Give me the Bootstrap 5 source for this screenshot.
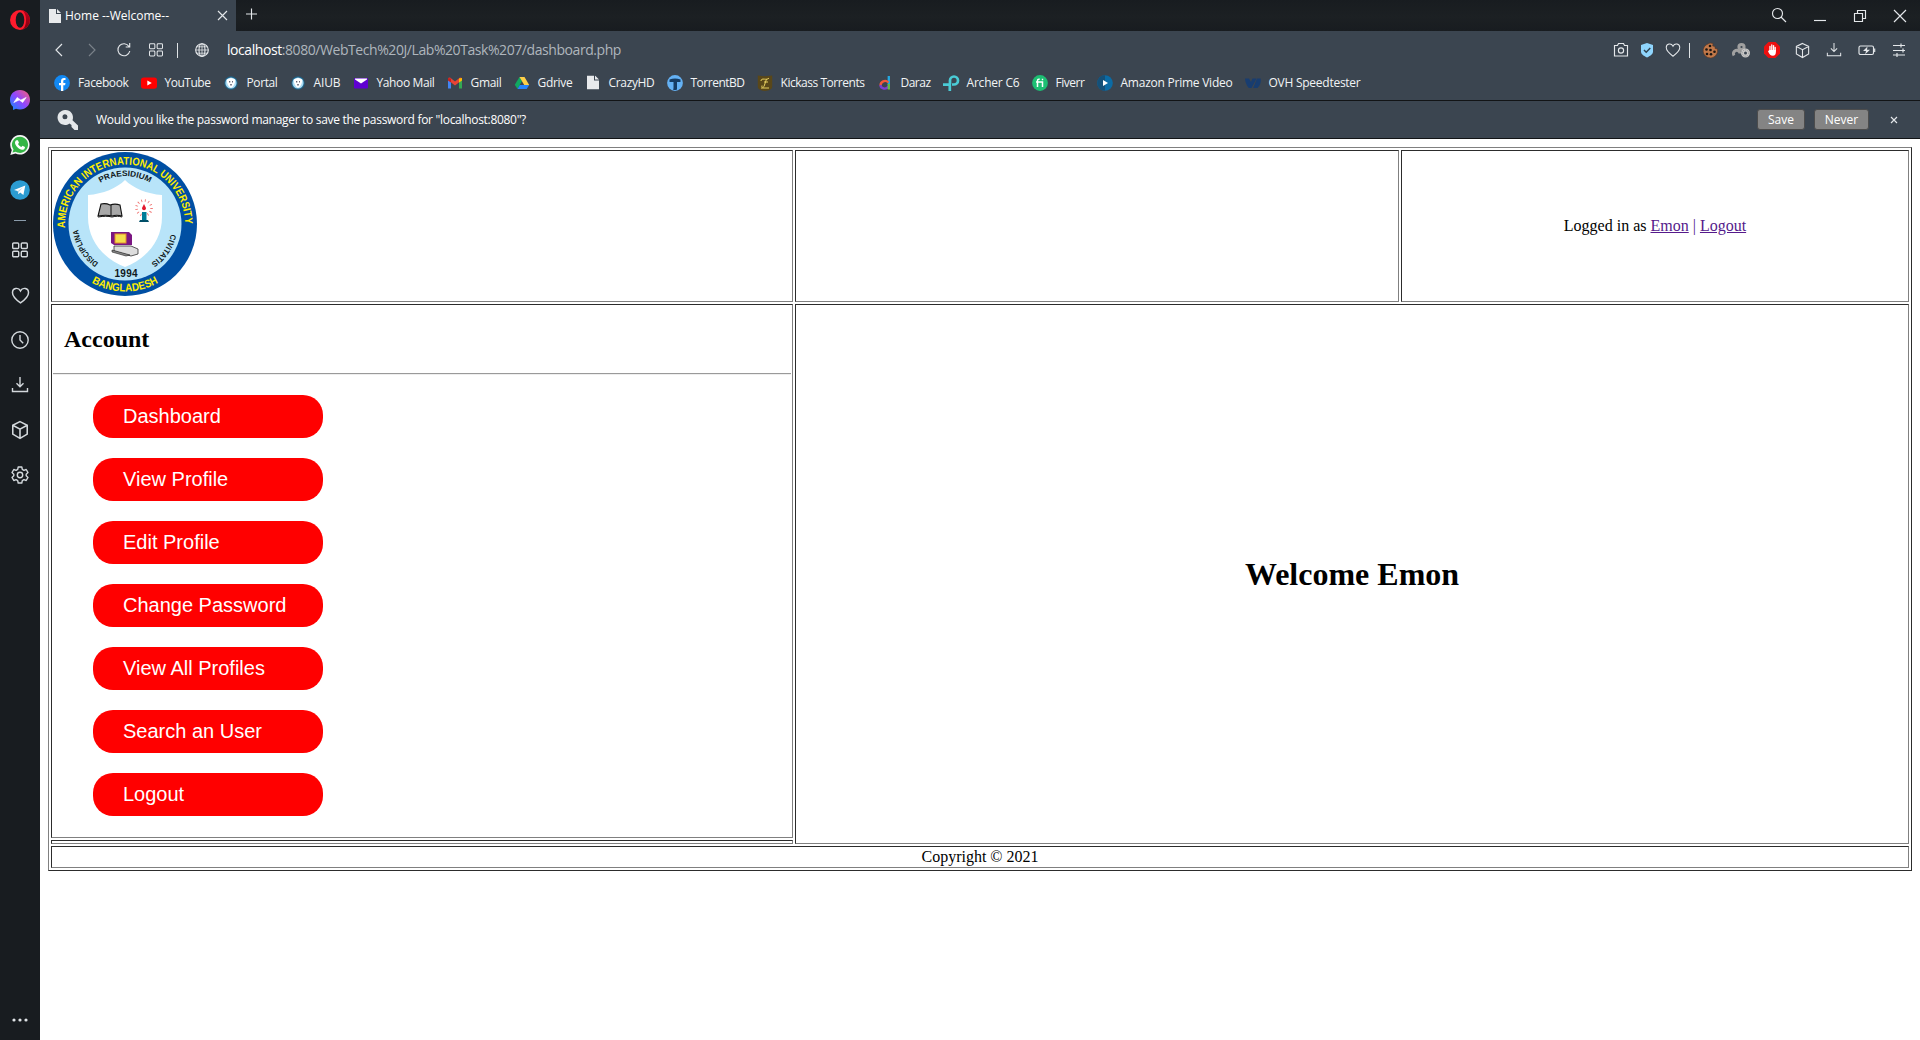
<!DOCTYPE html>
<html lang="en">
<head>
<meta charset="utf-8">
<title>Home --Welcome--</title>
<link href="https://cdn.jsdelivr.net/npm/bootstrap@5.3.0/dist/css/bootstrap.min.css" rel="stylesheet">
<style>
body{font-family:"Open Sans","Noto Sans",sans-serif;font-size:12px;line-height:16px;overflow:hidden;background:#fff}
svg{display:block;flex:none;overflow:visible}
.ln{fill:none;stroke:#e4e7ea;stroke-width:1.15}
.side{width:40px;background:#181c20}
.side .slot{height:45px}
.side .first{height:40px;margin-bottom:37.5px}
.side .dash{height:15px}
.side .more{height:22px}
.side .ln{stroke-width:1.4;stroke:#d3d8dc}
.tabs{height:31px;background:linear-gradient(#181c20,#1c2023 55%,#181c20)}
.tab1{width:196px;background:#3b4550;color:#fff;padding:0 9px 0 9px}
.wins{gap:28px;padding-right:14px}
.chrome{background:#3b4550;color:#f2f4f5}
.addr{height:38px;padding:0 12px 0 13px}
.url{font-size:14px;line-height:20px;color:#afb6bd}
.url b{font-weight:400;color:#fff}
.vsep{width:1px;height:15px;background:#dfe3e6}
.marks{height:32px;border-bottom:1px solid #121416;padding:6px 0 0 14px;gap:12px}
.info{height:38px;border-bottom:1px solid #121416;padding:0 23px 0 18px;color:#fff}
.ibtn{height:21px;background:#848484;border:1px solid #4c4c4c;border-radius:3px;color:#fff;font-size:12px;line-height:18px;padding:0}
.page{padding:8px;font-family:"Liberation Serif",serif;font-size:16px;line-height:18px;color:#000}
.grid0{width:1864px;height:724px;table-layout:fixed;border-collapse:separate;border-spacing:2px;border:1px solid;border-color:#808080 #2c2c2c #2c2c2c #808080}
.grid0 td{border:1px solid;border-color:#2c2c2c #808080 #808080 #2c2c2c;padding:1px;vertical-align:middle}
.grid0 h2{font-size:24px;line-height:27px;font-weight:700;margin:20px 0 20px 11px}
.grid0 h1{font-size:32px;line-height:36px;font-weight:700;margin:0}
.rule{height:2px;border-top:1px solid #9a9a9a;border-bottom:1px solid #eee}
.menu{padding:20px 0 20px 40px;gap:20px}
.menu a{width:230px;height:43px;border-radius:20px;background:#f00;color:#fff;font:20px/42px "Liberation Sans",sans-serif;padding-left:30px;text-decoration:none}
.who a{color:#551a8b}
.who i{font-style:normal;color:#551a8b}
.seal text{font-family:"Liberation Sans Narrow","Liberation Sans",sans-serif;font-weight:700}
</style>
<script src="https://cdn.jsdelivr.net/npm/bootstrap@5.3.0/dist/js/bootstrap.bundle.min.js"></script>
</head>
<body class="d-flex vh-100">
<svg width="0" height="0" class="position-absolute">
<defs>
<symbol id="cube" viewBox="0 0 18 18"><path d="M9 1.500l6.500 3.200v8L9 16.500l-6.500-3.800v-8zM2.500 4.700L9 8.200l6.500-3.500M9 8.200v8.300"/></symbol>
<symbol id="heart" viewBox="0 0 18 18"><path d="M9 16C6 13.800 1.400 10.200 1.400 6.300 1.400 1.800 7 .8 9 4.700 11 .8 16.600 1.800 16.600 6.300 16.600 10.200 12 13.800 9 16z"/></symbol>
<symbol id="down" viewBox="0 0 18 18"><path d="M9 1v9.500M5.500 7.200L9 10.700l3.500-3.500M1.500 12v3.500h15V12"/></symbol>
<symbol id="four" viewBox="0 0 18 18"><rect x="1.700" y="2" width="6" height="5.500" rx="1"/><rect x="10.300" y="2" width="6" height="5.500" rx="1"/><rect x="1.700" y="10.200" width="6" height="5.500" rx="1"/><rect x="10.300" y="10.200" width="6" height="5.500" rx="1"/></symbol>
<symbol id="doc" viewBox="0 0 12 14"><path fill="#e8eaec" d="M0 0h7v5h5v9H0zM8 0l4 4H8z"/></symbol>
<symbol id="crest" viewBox="0 0 16 16"><circle cx="8" cy="8" r="6.700" fill="#1f6186"/><circle cx="8" cy="8" r="5.600" fill="#a9dcf5"/><path d="M3.800 4.500L8 3l4.200 1.500c0 4-1 6.500-4.200 8.500-3.200-2-4.200-4.500-4.200-8.500z" fill="#fff"/><path d="M6 6h1.300v1.500H6zM9 6h1v1.500H9zM7.200 9h1.600v1.600H7.200z" fill="#667"/></symbol>
<linearGradient id="gm" x1="0" y1="1" x2="1" y2="0"><stop offset="0" stop-color="#0a8cff"/><stop offset=".5" stop-color="#9146ff"/><stop offset="1" stop-color="#ff5f70"/></linearGradient>
<linearGradient id="go" x1="0" x2="0" y1="0" y2="1"><stop offset="0" stop-color="#c0001c"/><stop offset="1" stop-color="#7e000f"/></linearGradient>
</defs></svg>

<nav class="side d-flex flex-column align-items-center flex-shrink-0">
 <div class="first d-flex align-items-center"><svg width="20" height="20" viewBox="0 0 20 20"><ellipse cx="10" cy="10" rx="10" ry="10" fill="#ff1b2d"/><path d="M10 0a10 10 0 0 1 0 20c4 0 6-5 6-10S14 0 10 0z" fill="url(#go)"/><ellipse cx="10" cy="10" rx="4.300" ry="7.800" fill="#181c20"/></svg></div>
 <div class="slot d-flex align-items-center"><svg width="20" height="20" viewBox="0 0 20 20"><path fill="url(#gm)" d="M10 0C4 0 0 4.300 0 9.700c0 3 1.200 5.500 3 7.100V20l3-1.300c1.200.5 2.600.7 4 .7 6 0 10-4.300 10-9.700S16 0 10 0z"/><path d="M3.800 12.600l3.400-5.200 3.600 2.700L16.200 7.400l-3.500 5.100-3.500-2.600z" fill="#fff" stroke="#fff" stroke-width=".6"/></svg></div>
 <div class="slot d-flex align-items-center"><svg width="20" height="20" viewBox="0 0 20 20"><path fill="#f5f5f5" d="M10.200 0A9.800 9.800 0 0 0 1.800 15L.3 20l5.200-1.400A9.800 9.800 0 1 0 10.200 0z"/><path fill="#34b545" d="M10.200 1.700a8.100 8.100 0 0 0-6.700 12.900l-1 3 3.200-.9A8.100 8.100 0 1 0 10.200 1.700z"/><path fill="#fff" d="M6.600 5.300h1.300l1.100 2.500-1 1.300c.8 1.500 1.900 2.400 3.400 3l1.100-1.300 2.500 1.200c0 2-1.400 2.800-3 2.800-3-.3-6.800-4-7-7 0-1.200.6-2.200 1.600-2.500z"/></svg></div>
 <div class="slot d-flex align-items-center"><svg width="20" height="20" viewBox="0 0 20 20"><circle cx="10" cy="10" r="9.800" fill="#2c9cd2"/><path d="M4 10L15.300 5.400 13.400 15l-3.300-2.500-1.700 1.800-.7-3.300z" fill="#fff"/><path d="M7.800 11l5.400-3.700-4 4.300-.8 2.400z" fill="#b8d4e4"/></svg></div>
 <div class="dash d-flex align-items-center"><svg width="12" height="1"><rect width="12" height="1" fill="#8b9cab"/></svg></div>
 <div class="slot d-flex align-items-center"><svg class="ln" width="18" height="18"><use href="#four"/></svg></div>
 <div class="slot d-flex align-items-center"><svg class="ln" width="19" height="19"><use href="#heart"/></svg></div>
 <div class="slot d-flex align-items-center"><svg class="ln" width="18" height="18" viewBox="0 0 18 18"><circle cx="9" cy="9" r="8.200"/><path d="M9 4v5l3.200 3.200"/></svg></div>
 <div class="slot d-flex align-items-center"><svg class="ln" width="18" height="18"><use href="#down"/></svg></div>
 <div class="slot d-flex align-items-center"><svg class="ln" width="20" height="20"><use href="#cube"/></svg></div>
 <div class="slot d-flex align-items-center"><svg class="ln" width="18" height="18" viewBox="0 0 18 18" stroke-linejoin="round"><path d="M7.200 1h3.600l.5 2.400 1.600.9 2.300-.8 1.800 3.100L15.200 8.200v1.600l1.800 1.600-1.800 3.100-2.300-.8-1.600.9-.5 2.400H7.200l-.5-2.400-1.600-.9-2.300.8L1 11.400l1.800-1.600V8.200L1 6.600l1.800-3.100 2.300.8 1.600-.9z"/><circle cx="9" cy="9" r="2.700"/></svg></div>
 <div class="more mt-auto"><svg width="16" height="4"><g fill="#dfe3e6"><circle cx="2" cy="2" r="1.600"/><circle cx="8" cy="2" r="1.600"/><circle cx="14" cy="2" r="1.600"/></g></svg></div>
</nav>

<div class="flex-grow-1 d-flex flex-column">
<header class="chrome">
 <div class="tabs d-flex justify-content-between">
  <div class="d-flex align-items-stretch">
   <div class="tab1 d-flex align-items-center"><svg width="12" height="14"><use href="#doc"/></svg><span class="ms-1 text-nowrap" data-w="104">Home --Welcome--</span><svg class="ms-auto ln" width="9" height="9" viewBox="0 0 9 9"><path d="M0 0l9 9M9 0L0 9"/></svg></div>
   <svg class="ln align-self-center ms-2 mb-1" width="12" height="12" viewBox="0 0 12 12"><path d="M7.500 .5v11M2 6h11"/></svg>
  </div>
  <div class="wins d-flex align-items-center">
   <svg class="ln" width="14" height="14" viewBox="0 0 14 14"><circle cx="5.500" cy="4.500" r="5"/><path d="M9 8l5 5"/></svg>
   <svg class="ln" width="12" height="12" viewBox="0 0 12 12"><path d="M0 10.500h12"/></svg>
   <svg class="ln" width="12" height="12" viewBox="0 0 12 12"><path d="M.5 3.500h8v8h-8zM3.500 3.500v-3h8v8h-3"/></svg>
   <svg class="ln" width="12" height="12" viewBox="0 0 12 12"><path d="M0 0l12 12M12 0L0 12"/></svg>
  </div>
 </div>
 <div class="addr d-flex align-items-center">
  <svg class="ln" width="12" height="14" viewBox="0 0 12 14"><path d="M9 1L3 7l6 6"/></svg>
  <svg class="ln ms-3 opacity-50" width="12" height="14" viewBox="-4 0 12 14"><path d="M4 1l6 6-6 6" opacity=".75"/></svg>
  <svg class="ln" style="margin-left:24px" width="14" height="14" viewBox="0 0 14 14"><path d="M12 3.500A6 6 0 1 0 12.800 8M12.700 0v4H8.700"/></svg>
  <svg class="ln" style="margin-left:17px" width="16" height="16"><use href="#four"/></svg>
  <span class="vsep" style="margin-left:13px"></span>
  <svg class="ln" style="margin-left:17px" width="14" height="14" viewBox="0 0 14 14"><circle cx="7" cy="7" r="6.300"/><ellipse cx="7" cy="7" rx="3" ry="6.300"/><path d="M.7 7h12.600M7 .7v12.600M1.600 3.800h10.800M1.600 10.200h10.800" stroke-width=".8"/></svg>
  <span class="url text-nowrap" style="margin-left:18px" data-w="394"><b>localhost</b>:8080/WebTech%20J/Lab%20Task%207/dashboard.php</span>
  <div class="d-flex align-items-center ms-auto">
   <svg class="ln" width="18" height="18" viewBox="0 0 18 18"><path d="M2.500 4.500h3l1-2h5l1 2h3v10.500h-13z"/><circle cx="9" cy="9.500" r="2.600"/></svg>
   <svg style="margin-left:8px" width="18" height="18" viewBox="0 0 18 18"><path fill="#8fd5fd" d="M9 2l6 2v6.500c0 3-3 4.500-6 6-3-1.500-6-3-6-6V4z"/><path d="M6 9l2.200 2.200L12.300 7" fill="none" stroke="#2e4352" stroke-width="1.500"/></svg>
   <svg class="ln" style="margin-left:9px" width="16" height="16"><use href="#heart"/></svg>
   <span class="vsep" style="margin:0 11px 0 8px"></span>
   <svg width="18" height="18" viewBox="0 0 18 18"><path fill="#c17849" stroke="#5a3521" stroke-width=".6" d="M9 2l3 .5-.3 2.500 2.300.5v2l2.300.4A7.200 7.200 0 1 1 5 4z"/><g fill="#191513"><circle cx="9" cy="5" r="1.300"/><circle cx="5.500" cy="8.500" r="1.300"/><circle cx="9.500" cy="9" r="1.300"/><circle cx="6" cy="13" r="1.300"/><circle cx="10" cy="13.300" r="1.300"/><circle cx="13.500" cy="10.800" r="1.300"/></g></svg>
   <svg style="margin-left:13px" width="18" height="18" viewBox="0 0 18 18"><g fill="none" stroke="#a0a0a0" stroke-width="3"><circle cx="9.500" cy="6" r="2.600"/><path d="M2 14.500a3.300 3.300 0 1 1 6-2"/><circle cx="13.500" cy="12" r="3" stroke="#c8c8c8"/></g><circle cx="13.500" cy="12" r="3.200" fill="none" stroke="#777" stroke-width=".6" stroke-dasharray="1 1"/></svg>
   <svg style="margin-left:13px" width="18" height="18" viewBox="0 0 18 18"><path fill="#ed1010" d="M5.500 1h7L17 5.500v7L12.500 17h-7L1 12.500v-7z"/><path d="M7 10V5.300M8.800 9V4M10.600 9V4.600M12.200 10V6.500" stroke="#fff" stroke-width="1.300" stroke-linecap="round"/><path fill="#fff" d="M6.400 9h6.500v2c0 2-1 3.800-3 3.800-2.300 0-3.600-1.500-4.900-4.500l.8-.7z"/></svg>
   <svg class="ln" style="margin-left:13px" width="17" height="17"><use href="#cube"/></svg>
   <svg class="ln" style="margin-left:15px" width="16" height="16"><use href="#down"/></svg>
   <svg class="ln" style="margin-left:16px" width="18" height="18" viewBox="0 0 18 18"><rect x="1" y="5" width="14.500" height="8.500" rx="1.500"/><path d="M16.700 7.500v3.500"/><path fill="#e4e7ea" stroke="none" d="M9.500 5.500L5 10h3l-.8 3.300L12 8.700H9z"/></svg>
   <svg class="ln" style="margin-left:14px" width="18" height="18" viewBox="0 0 18 18"><path d="M3 4.500h12M3 9.500h12M3 14h12M11 2.500v4M13 7.500v4M7 12v4"/></svg>
  </div>
 </div>
 <div class="marks d-flex text-nowrap">
  <div class="d-flex gap-2"><svg width="16" height="16" viewBox="0 0 16 16"><circle cx="8" cy="8" r="7.900" fill="#1289f4"/><path fill="#fff" d="M7 16v-5.700H5V8h2V6.300C7 4 8.200 3 10 3l1.500.1v2h-1C9.600 5.100 9.300 5.600 9.300 6.300V8h2.200l-.4 2.300H9.300V16z"/></svg><span data-w="50.500">Facebook</span></div>
  <div class="d-flex gap-2"><svg width="16" height="16" viewBox="0 0 16 16"><rect y="2.500" width="16" height="11.300" rx="2.800" fill="#f00"/><path d="M6.300 5.600v5l4.500-2.500z" fill="#fff"/></svg><span data-w="46">YouTube</span></div>
  <div class="d-flex gap-2"><svg width="16" height="16"><use href="#crest"/></svg><span data-w="31">Portal</span></div>
  <div class="d-flex gap-2"><svg width="16" height="16"><use href="#crest"/></svg><span data-w="27">AIUB</span></div>
  <div class="d-flex gap-2"><svg width="16" height="16" viewBox="0 0 16 16"><rect x="1" y="3" width="14" height="10.500" rx="1" fill="#5f01d1"/><path fill="#fff" d="M2 3.500h12v1L8 8.500 2 4.500z"/></svg><span data-w="58">Yahoo Mail</span></div>
  <div class="d-flex gap-2"><svg width="16" height="16" viewBox="0 0 16 16"><path fill="#4285f4" d="M1 4.500l3 2v7H1z"/><path fill="#34a853" d="M12 6.500l3-2v9h-3z"/><path fill="#ea4335" d="M1 3l2-.4 5 4 5-4L15 3v2l-7 5.500L1 5z"/><path fill="#fbbc04" d="M12 3.500L15 3v2.500l-3 2z"/><path fill="#c5221f" d="M1 3l3 .5v4l-3-2z"/></svg><span data-w="31">Gmail</span></div>
  <div class="d-flex gap-2"><svg width="16" height="16" viewBox="0 0 16 16"><path fill="#11a861" d="M5.500 2L8 6 3.500 14 .8 9.800z"/><path fill="#ffcf48" d="M5.500 2h5l4.700 8h-5z"/><path fill="#2684fc" d="M5.800 10h9.400l-2.500 4H3.500z"/></svg><span data-w="35">Gdrive</span></div>
  <div class="d-flex gap-2"><svg width="16" height="15" viewBox="0 0 16 14"><use href="#doc" x="2" width="12" height="14"/></svg><span data-w="46">CrazyHD</span></div>
  <div class="d-flex gap-2"><svg width="16" height="16" viewBox="0 0 16 16"><circle cx="8" cy="8" r="7.900" fill="#64b1f4"/><path fill="#163c63" d="M2.500 4.500C6 3 10 3 13.500 4.500V7h-3.500v7.500c-1.400.7-2.800.7-4 0l.5-1V7h-4z"/></svg><span data-w="54">TorrentBD</span></div>
  <div class="d-flex gap-2"><svg width="16" height="16" viewBox="0 0 16 16"><path fill="#594719" d="M.8.500L8 1.300l7.200-.8v11c0 3-3.200 4-7.200 4.500-4-.5-7.200-1.500-7.200-4.500z"/><path d="M4 6c0-4 6 0 8-3M9.500 4L7 11.500c-1 1.500-3 .5-2-1M7 7h4M4 13h8" fill="none" stroke="#e6cf60" stroke-width="1"/></svg><span data-w="84">Kickass Torrents</span></div>
  <div class="d-flex gap-2"><svg width="16" height="16" viewBox="0 0 16 16"><g fill="none" stroke-width="2.300"><path d="M11.800 1v9" stroke="#24a9e2"/><path d="M11.500 7.500C8 4 3.500 7 3.500 10.500" stroke="#f4583a"/><path d="M3.500 10c0 4 6 5 8 1" stroke="#7c3fd0"/><path d="M11.800 9v5.500" stroke="#63bf42"/></g></svg><span data-w="30">Daraz</span></div>
  <div class="d-flex gap-2"><svg width="16" height="16" viewBox="0 0 16 16"><path d="M7 9V5.500A4 4 0 1 1 11 9.500H9M0 9.700h6.800V16" fill="none" stroke="#4acbd6" stroke-width="2.700"/></svg><span data-w="53">Archer C6</span></div>
  <div class="d-flex gap-2"><svg width="16" height="16" viewBox="0 0 16 16"><circle cx="8" cy="8" r="7.900" fill="#1dbf73"/><path d="M5.500 12V6c0-1.500 1-2 2.200-1.700M4 7h6.500v5M9.800 4.500h1.400" fill="none" stroke="#fff" stroke-width="1.500"/></svg><span data-w="29">Fiverr</span></div>
  <div class="d-flex gap-2"><svg width="16" height="16" viewBox="0 0 16 16"><circle cx="8" cy="8" r="7.800" fill="#0b6ba5"/><path d="M8 .2a7.800 7.800 0 0 0 0 15.600z" fill="#155078"/><path d="M6 5v6L11 8z" fill="#fff"/></svg><span data-w="112">Amazon Prime Video</span></div>
  <div class="d-flex gap-2"><svg width="16" height="16" viewBox="0 0 16 16"><path fill="#183d70" d="M0 3.500h4l2 3.500 1.500-3.500h4L6.500 13H3.800C2 11 0 7 0 3.500zM12 3.500h3.700c.6 4-.7 7-3.200 9.500H8.200z"/></svg><span data-w="92">OVH Speedtester</span></div>
 </div>
 <div class="info d-flex align-items-center">
  <svg width="20" height="20" viewBox="0 0 20 20"><path fill="#e4e7ea" fill-rule="evenodd" d="M7.500 0a7.500 7.500 0 0 1 7 10.200L20 15.500V20h-3.500l-3-3v-2l-2-1.500A7.500 7.500 0 1 1 7.500 0zM7 4.300a2.500 2.500 0 1 0 0 5 2.500 2.500 0 0 0 0-5z"/></svg>
  <span class="text-nowrap" style="margin-left:18px" data-w="430">Would you like the password manager to save the password for "localhost:8080"?</span>
  <button class="ibtn ms-auto" style="width:48px">Save</button>
  <button class="ibtn" style="width:55px;margin:0 22px 0 9px">Never</button>
  <svg class="ln" width="6" height="6" viewBox="0 0 6 6"><path d="M0 0l6 6M6 0L0 6"/></svg>
 </div>
</header>

<main class="page">
<table class="grid0">
<colgroup><col style="width:742px"><col style="width:604px"><col style="width:508px"></colgroup>
<tr style="height:152px">
 <td>
 <svg class="seal mb-1" width="144" height="144" viewBox="0 0 144 144">
  <defs><path id="ao" d="M12.100 76A60 60 0 1 1 131.900 76"/><path id="ab" d="M4.500 72A67.500 67.500 0 0 0 139.500 72"/>
  <path id="ai" d="M24 72a48 48 0 0 1 96 0"/><path id="dl" d="M45.500 110.800A47 47 0 0 1 25 72"/><path id="cr" d="M118 82A47 47 0 0 1 92 114.500"/></defs>
  <circle cx="72" cy="72" r="72" fill="#004fa3"/><circle cx="72" cy="72" r="56.500" fill="#b8e4f9"/>
  <path fill="#fff" d="M72 28c8 8 22 14 37 15v22c0 24-16 42-37 50-21-8-37-26-37-50V43c15-1 29-7 37-15z"/>
  <g fill="#ffed00" font-size="11"><text textLength="191" lengthAdjust="spacingAndGlyphs"><textPath href="#ao" textLength="191" lengthAdjust="spacingAndGlyphs">AMERICAN INTERNATIONAL UNIVERSITY</textPath></text>
  <text text-anchor="middle"><textPath href="#ab" startOffset="50%" textLength="70" lengthAdjust="spacingAndGlyphs">BANGLADESH</textPath></text></g>
  <g fill="#101820" font-size="8"><text text-anchor="middle"><textPath href="#ai" startOffset="50%" textLength="52" lengthAdjust="spacingAndGlyphs">PRAESIDIUM</textPath></text>
  <text><textPath href="#dl" textLength="40" lengthAdjust="spacingAndGlyphs">DISCIPLINA</textPath></text><text><textPath href="#cr" textLength="36" lengthAdjust="spacingAndGlyphs">CIVITATIS</textPath></text>
  <text x="73" y="125" text-anchor="middle" font-size="10" textLength="23">1994</text></g>
  <path d="M48 52c5-1 7 0 9 1 3-1 7-1 10 0l2 11c-4-1-7-1-10 0-4-1-8-1-14 0z" fill="#a8a8a8" stroke="#111" stroke-width="1.100"/><path d="M58 53v11M45 65c6-1 10-1 14 0 4-1 7-1 10 0" stroke="#111" fill="none"/>
  <circle cx="91" cy="56" r="7.500" fill="none" stroke="#ee6a68" stroke-width="2.600" stroke-dasharray=".8 2.800"/>
  <path d="M91 52l2 4c0 3-4 3-4 0z" fill="#e3182d"/><path d="M89 60h4.500v9H89z" fill="#007c98"/><path d="M87 68h8l1 2h-10z" fill="#004f68"/>
  <path d="M58 80h18l3 3v10H61l-3-2z" fill="#7b1682"/><rect x="62" y="82" width="11" height="9" fill="#f5df4d" stroke="#e28d2d"/>
  <path d="M61 94h17l7 3v5l-7 2-17-5z" fill="#ddd" stroke="#333" stroke-width=".8"/><path d="M59 98l18 5-4 1-14-4z" fill="#888" stroke="#222" stroke-width=".6"/>
 </svg>
 </td>
 <td></td>
 <td class="who text-center">Logged in as <a href="#">Emon</a> <i>|</i> <a href="#">Logout</a></td>
</tr>
<tr style="height:534px">
 <td class="align-top">
  <h2>Account</h2>
  <div class="rule"></div>
  <div class="menu d-flex flex-column"><a href="#">Dashboard</a><a href="#">View Profile</a><a href="#">Edit Profile</a><a href="#">Change Password</a><a href="#">View All Profiles</a><a href="#">Search an User</a><a href="#">Logout</a></div>
 </td>
 <td colspan="2" rowspan="2" class="text-center"><h1>Welcome Emon</h1></td>
</tr>
<tr style="height:4px"><td></td></tr>
<tr style="height:22px"><td colspan="3" class="text-center">Copyright © 2021</td></tr>
</table>
</main>
</div>
<script>
// Tune tracking so each label occupies its allotted width
document.querySelectorAll('[data-w]').forEach(function (el) {
  var want = +el.dataset.w, r = document.createRange();
  r.selectNodeContents(el);
  var have = r.getBoundingClientRect().width;
  el.style.letterSpacing = ((want - have) / el.textContent.length) + 'px';
});
</script>
</body>
</html>
